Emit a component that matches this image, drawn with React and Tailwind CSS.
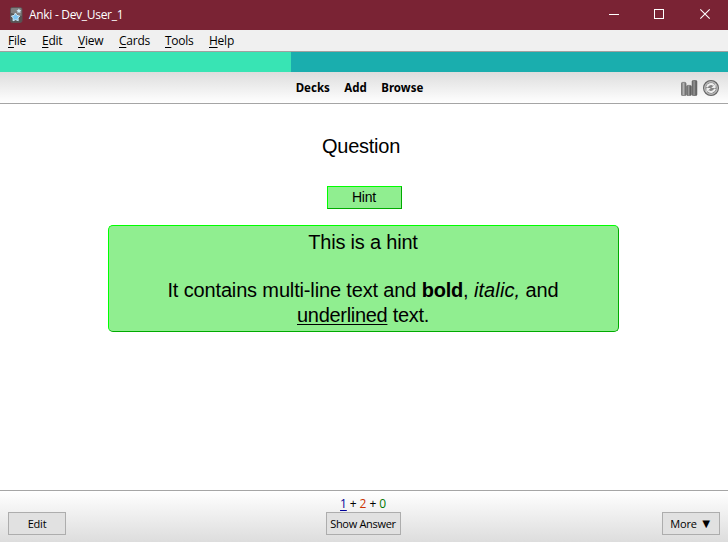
const menus = [
  { label: "File", cls: "w-[34px]" },
  { label: "Edit", cls: "w-[36px]" },
  { label: "View", cls: "w-[41px]" },
  { label: "Cards", cls: "w-[46px]" },
  { label: "Tools", cls: "w-[44px]" },
  { label: "Help", cls: "w-[40px]" },
];

function AppIcon() {
  return (
    <svg width="13" height="16" viewBox="0 0 13 16">
      <rect x="0.5" y="0.5" width="11.5" height="15" rx="1.8" fill="#555" stroke="#5f5053" />
      <path d="M1 2Q1 1 2 1H10.5Q11.5 1 11.5 2V9L1 6Z" fill="#808080" />
      <path d="M5.4 6L7 8.4L9.8 9L8 11L8.3 13.7L5.6 12.7L3 13.8L3.2 11L1.4 9L4.2 8.4Z" fill="#7cc4f2" stroke="#d9effc" strokeWidth="0.9" />
      <path d="M8.9 1.6L9.7 3L11.3 3.3L10.2 4.4L10.4 6L8.9 5.3L7.4 6L7.6 4.4L6.5 3.3L8.1 3Z" fill="#cfe8f7" />
    </svg>
  );
}

function StatsIcon() {
  return (
    <svg width="17" height="16" viewBox="0 0 17 16">
      <defs>
        <linearGradient id="bar" x1="0" x2="1" y1="0" y2="0">
          <stop offset="0" stopColor="#707070" />
          <stop offset="0.45" stopColor="#b4b4b4" />
          <stop offset="1" stopColor="#666" />
        </linearGradient>
        <linearGradient id="barDark" x1="0" x2="1" y1="0" y2="0">
          <stop offset="0" stopColor="#555" />
          <stop offset="0.4" stopColor="#999" />
          <stop offset="1" stopColor="#444" />
        </linearGradient>
      </defs>
      <rect x="0.4" y="2.4" width="4.6" height="13.2" rx="1.2" fill="url(#bar)" stroke="#707070" strokeWidth="0.8" />
      <rect x="5.6" y="5.4" width="4.8" height="10.2" rx="1.2" fill="url(#barDark)" stroke="#777" strokeWidth="0.8" />
      <rect x="11.2" y="0.4" width="4.6" height="15.2" rx="1.2" fill="url(#barDark)" stroke="#606060" strokeWidth="0.8" />
    </svg>
  );
}

function SyncIcon() {
  return (
    <svg width="16" height="16" viewBox="0 0 16 16">
      <circle cx="8" cy="8" r="7.4" fill="#9b9b9b" stroke="#666" strokeWidth="1.2" />
      <circle cx="8" cy="8" r="6.2" fill="#858585" stroke="#cfcfcf" strokeWidth="0.9" />
      <path d="M4 7.2A4.1 4.1 0 0 1 10.8 5.2" fill="none" stroke="#eee" strokeWidth="2" />
      <path d="M12.6 3.8V8H8.2Z" fill="#eee" />
      <path d="M12 8.8A4.1 4.1 0 0 1 5.2 10.8" fill="none" stroke="#eee" strokeWidth="2" />
      <path d="M3.4 12.2V8H7.8Z" fill="#eee" />
    </svg>
  );
}

const buttonCls =
  "flex h-[23px] items-center justify-center whitespace-nowrap border border-[#adadad] bg-[#e1e1e1] text-[11px] leading-none text-black";

export default function App() {
  return (
    <div className="flex h-[542px] w-[728px] flex-col overflow-hidden bg-white font-['Open_Sans',sans-serif] text-black">
      <header className="flex h-[30px] shrink-0 items-center bg-[#7a2334] text-white">
        <div className="ml-[10px]"><AppIcon /></div>
        <span className="ml-[6px] text-[12px] leading-none tracking-[-0.3px]">Anki - Dev_User_1</span>
        <div className="ml-auto flex">
          <svg width="138" height="30" viewBox="0 0 138 30" fill="none" stroke="#fff">
            <path d="M19 14.5H29" />
            <rect x="64.5" y="9.5" width="9" height="9" />
            <path d="M110.3 9.3L119.7 18.7M119.7 9.3L110.3 18.7" strokeWidth="1.1" />
          </svg>
        </div>
      </header>

      <nav className="flex h-[22px] shrink-0 items-center border-b border-[#a0a0a0] bg-[#f0f0f0] pl-2 text-[12px] leading-none tracking-[-0.25px]">
        {menus.map((m) => (
          <span key={m.label} className={m.cls}>
            <span className="underline underline-offset-2">{m.label[0]}</span>
            {m.label.slice(1)}
          </span>
        ))}
      </nav>

      <div className="flex h-5 shrink-0 bg-[#1aaeae]">
        <div className="w-[291px] bg-[#38e4b4]" />
      </div>

      <div className="grid h-8 shrink-0 grid-cols-[1fr_auto_1fr] items-center border-b border-[#a5a5a5] bg-linear-to-b from-[#dddddd] to-white">
        <div />
        <div className="flex gap-[14.5px] pr-[9px] text-[11.5px] font-bold leading-none font-['Noto_Sans',sans-serif]">
          <span>Decks</span>
          <span>Add</span>
          <span>Browse</span>
        </div>
        <div className="flex justify-end gap-[5px] pr-[9px]">
          <StatsIcon />
          <SyncIcon />
        </div>
      </div>

      <main className="flex flex-1 flex-col items-center pt-[30px] font-['Liberation_Sans',Arial,sans-serif] text-[20px] leading-[24px]">
        <div className="pr-[6px] tracking-[-0.25px]">Question</div>
        <button className="mt-[28px] flex h-[23px] w-[75px] items-center justify-center border [border-style:outset] border-[#00ff00] bg-[#90ee90] pb-px text-[14px] leading-none tracking-[-0.2px]">
          Hint
        </button>
        <div className="mt-[16px] mr-[2px] h-[107px] w-[511px] rounded-[5px] border [border-style:outset] border-[#00ff00] bg-[#90ee90] pt-[4px] text-center">
          <p className="tracking-[-0.2px]">This is a hint</p>
          <p className="mt-[24px] whitespace-nowrap tracking-[-0.15px]">
            It contains multi-line text and <b className="tracking-[-0.2px]">bold</b>, <i className="tracking-[0.1px]">italic,</i> and
          </p>
          <p className="mt-px tracking-[-0.3px]">
            <u className="decoration-1 underline-offset-2">underlined</u> text.
          </p>
        </div>
      </main>

      <footer className="grid h-[52px] shrink-0 grid-cols-[58px_75px_58px] items-end justify-between border-t border-[#a5a5a5] bg-linear-to-b from-white to-[#dddddd] px-2 pb-[7px]">
        <button className={`${buttonCls} tracking-[-0.2px]`}>Edit</button>
        <div className="-ml-px mr-px">
          <div className="mb-[2px] text-center text-[12px] leading-[12px] tracking-[-0.1px]">
            <span className="text-[#000099] underline underline-offset-2">1</span> + <span className="text-[#cc3300]">2</span> + <span className="text-[#007700]">0</span>
          </div>
          <button className={`${buttonCls} w-[75px] tracking-[-0.3px]`}>Show Answer</button>
        </div>
        <button className={`${buttonCls} pl-px`}>
          <span className="tracking-[-0.2px]">More</span>
          <span className="ml-[3px] text-[13px]">▼</span>
        </button>
      </footer>
    </div>
  );
}
